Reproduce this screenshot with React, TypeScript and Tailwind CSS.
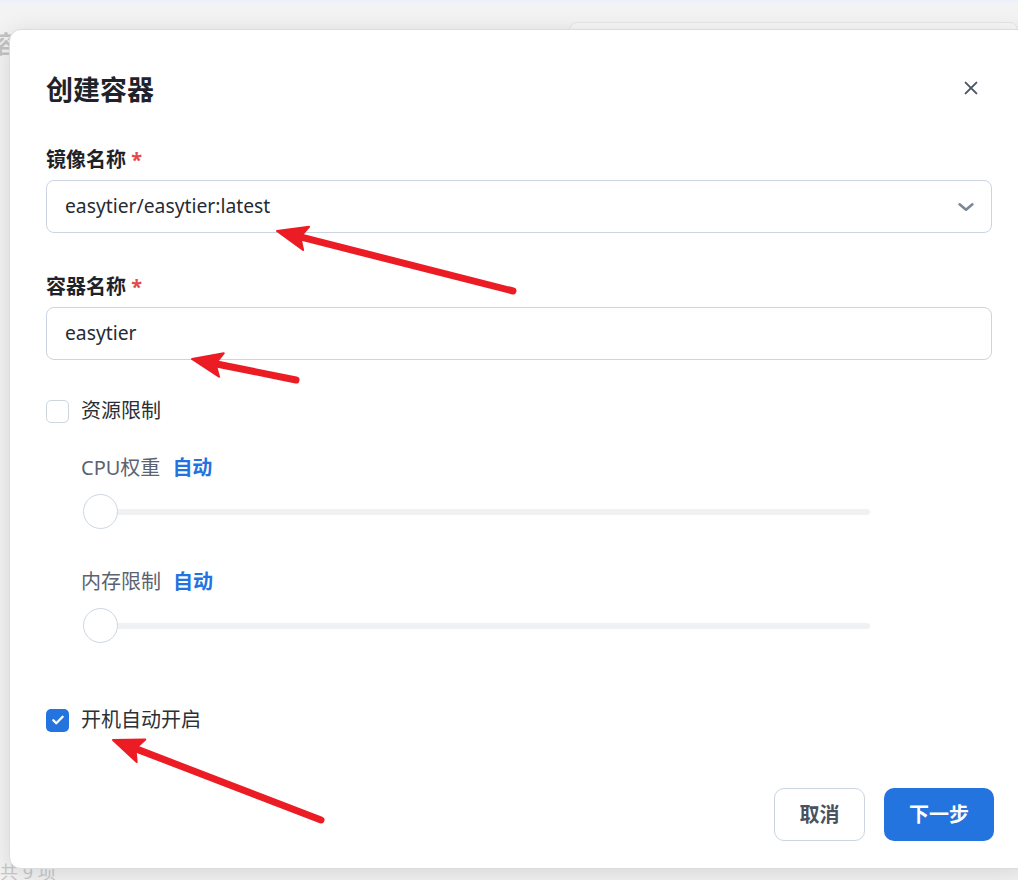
import React from "react";

const font = { fontFamily: '"Noto Sans", "Noto Sans CJK SC", sans-serif' };

type Pt = [number, number];

function Arrow({ tail, tip }: { tail: Pt; tip: Pt }) {
  const dx = tip[0] - tail[0];
  const dy = tip[1] - tail[1];
  const len = Math.hypot(dx, dy);
  const ux = dx / len;
  const uy = dy / len;
  const px = -uy;
  const py = ux;
  const head = 30;
  const half = 12;
  const bx = tip[0] - ux * head;
  const by = tip[1] - uy * head;
  const nx = tip[0] - ux * (head - 6);
  const ny = tip[1] - uy * (head - 6);
  const pts = [
    tip,
    [bx + px * half, by + py * half],
    [nx, ny],
    [bx - px * half, by - py * half],
  ]
    .map((p) => p.join(","))
    .join(" ");
  return (
    <g>
      <line
        x1={tail[0]}
        y1={tail[1]}
        x2={nx}
        y2={ny}
        stroke="#ec1c24"
        strokeWidth={7}
        strokeLinecap="round"
      />
      <polygon points={pts} fill="#ec1c24" stroke="#ec1c24" strokeWidth={2} strokeLinejoin="round" />
    </g>
  );
}

function Checkbox({ checked }: { checked?: boolean }) {
  if (checked) {
    return (
      <div className="w-[23px] h-[23px] rounded-[5px] bg-[#2474e0] flex items-center justify-center shrink-0">
        <svg width="14" height="14" viewBox="0 0 24 24" fill="none" stroke="white" strokeWidth="4" strokeLinecap="round" strokeLinejoin="round">
          <path d="M4 12.5l5 5L20 6.5" />
        </svg>
      </div>
    );
  }
  return <div className="w-[23px] h-[23px] rounded-[5px] border-[1.5px] border-[#cdd5e0] bg-white shrink-0" />;
}

function Slider() {
  return (
    <div className="relative ml-[37px] w-[787px] h-[35px] flex items-center">
      <div className="w-full h-[6px] rounded-full bg-[#f0f1f3]" />
      <div className="absolute left-0 top-0 w-[35px] h-[35px] rounded-full bg-white border-[1.5px] border-[#cdd6e2]" />
    </div>
  );
}

export default function App() {
  return (
    <div className="relative w-[1018px] h-[880px] overflow-hidden bg-[#f3f3f3]" style={font}>
      <div className="h-[3px] bg-[#eef2f8]" />
      {/* page behind the modal */}
      <div className="flex items-start">
        <div className="ml-[-6px] mt-[29px] whitespace-nowrap text-[24px] font-bold leading-none text-[#c4c4c4]">容器</div>
        <div className="ml-[527px] mt-[19px] w-[480px] h-[200px] rounded-lg border border-[#e6e6e6] bg-[#f7f7f7]" />
      </div>
      <div className="absolute left-0 bottom-[-6px] whitespace-nowrap text-[18px] text-[#c9c9c9]">共 9 项</div>

      {/* modal */}
      <div className="absolute left-[9px] top-[29px] w-[1020px] h-[840px] rounded-[12px] bg-white border border-[#dcdcdc] shadow-[0_4px_24px_rgba(0,0,0,0.12)] pl-[36px] pr-[36px] pt-[42px]">
        <div className="flex items-center justify-between h-[36px]">
          <div className="text-[27px] font-bold leading-[36px] text-[#1f2329]">创建容器</div>
          <div className="w-[42px] h-[42px] mb-[4px] flex items-center justify-center">
            <svg width="20" height="20" viewBox="0 0 24 24" fill="none" stroke="#4b5563" strokeWidth="2.3" strokeLinecap="round">
              <path d="M5.5 5.5l13 13M18.5 5.5l-13 13" />
            </svg>
          </div>
        </div>

        <div className="mt-[38px] text-[20px] font-bold leading-[28px] text-[#1f2329]">
          镜像名称 <span className="text-[#e5484d]">*</span>
        </div>
        <div className="mt-[6px] h-[53px] rounded-[8px] border border-[#cbd5e1] flex items-center justify-between pl-[18px] pr-[14px]">
          <span className="text-[19.3px] text-[#262b33]">easytier/easytier:latest</span>
          <svg width="22" height="22" viewBox="0 0 24 24" fill="none" stroke="#7b8798" strokeWidth="2.8" strokeLinecap="round" strokeLinejoin="round">
            <path d="M5 9l7 6 7-6" />
          </svg>
        </div>

        <div className="mt-[40px] text-[20px] font-bold leading-[28px] text-[#1f2329]">
          容器名称 <span className="text-[#e5484d]">*</span>
        </div>
        <div className="mt-[6px] h-[53px] rounded-[8px] border border-[#cbd5e1] flex items-center pl-[18px]">
          <span className="text-[19.3px] text-[#262b33]">easytier</span>
        </div>

        <div className="mt-[37px] h-[28px] flex items-center gap-[12px]">
          <Checkbox />
          <span className="text-[20px] leading-[28px] text-[#2b2f36]">资源限制</span>
        </div>

        <div className="mt-[29px] ml-[35px] h-[28px] flex items-center gap-[12px] text-[20px] leading-[28px]">
          <span className="text-[#5b6370]">CPU权重</span>
          <span className="font-bold text-[#2272df]">自动</span>
        </div>
        <div className="mt-[12px]">
          <Slider />
        </div>

        <div className="mt-[39px] ml-[35px] h-[28px] flex items-center gap-[12px] text-[20px] leading-[28px]">
          <span className="text-[#5b6370]">内存限制</span>
          <span className="font-bold text-[#2272df]">自动</span>
        </div>
        <div className="mt-[12px]">
          <Slider />
        </div>

        <div className="mt-[63px] h-[28px] flex items-center gap-[12px]">
          <Checkbox checked />
          <span className="text-[20px] leading-[28px] text-[#2b2f36]">开机自动开启</span>
        </div>

        <div className="mt-[54px] flex justify-end gap-[19px] w-[948px]">
          <div className="w-[91px] h-[53px] rounded-[10px] border border-[#cbd5e1] bg-white flex items-center justify-center text-[20px] font-bold text-[#4a5160]">
            取消
          </div>
          <div className="w-[110px] h-[53px] rounded-[10px] bg-[#2474e0] flex items-center justify-center text-[20px] font-bold text-white">
            下一步
          </div>
        </div>
      </div>

      <svg className="absolute inset-0 pointer-events-none" width="1018" height="880">
        <Arrow tail={[513, 291]} tip={[277, 231]} />
        <Arrow tail={[296, 380]} tip={[192, 359]} />
        <Arrow tail={[321, 820]} tip={[113, 740]} />
      </svg>
    </div>
  );
}
